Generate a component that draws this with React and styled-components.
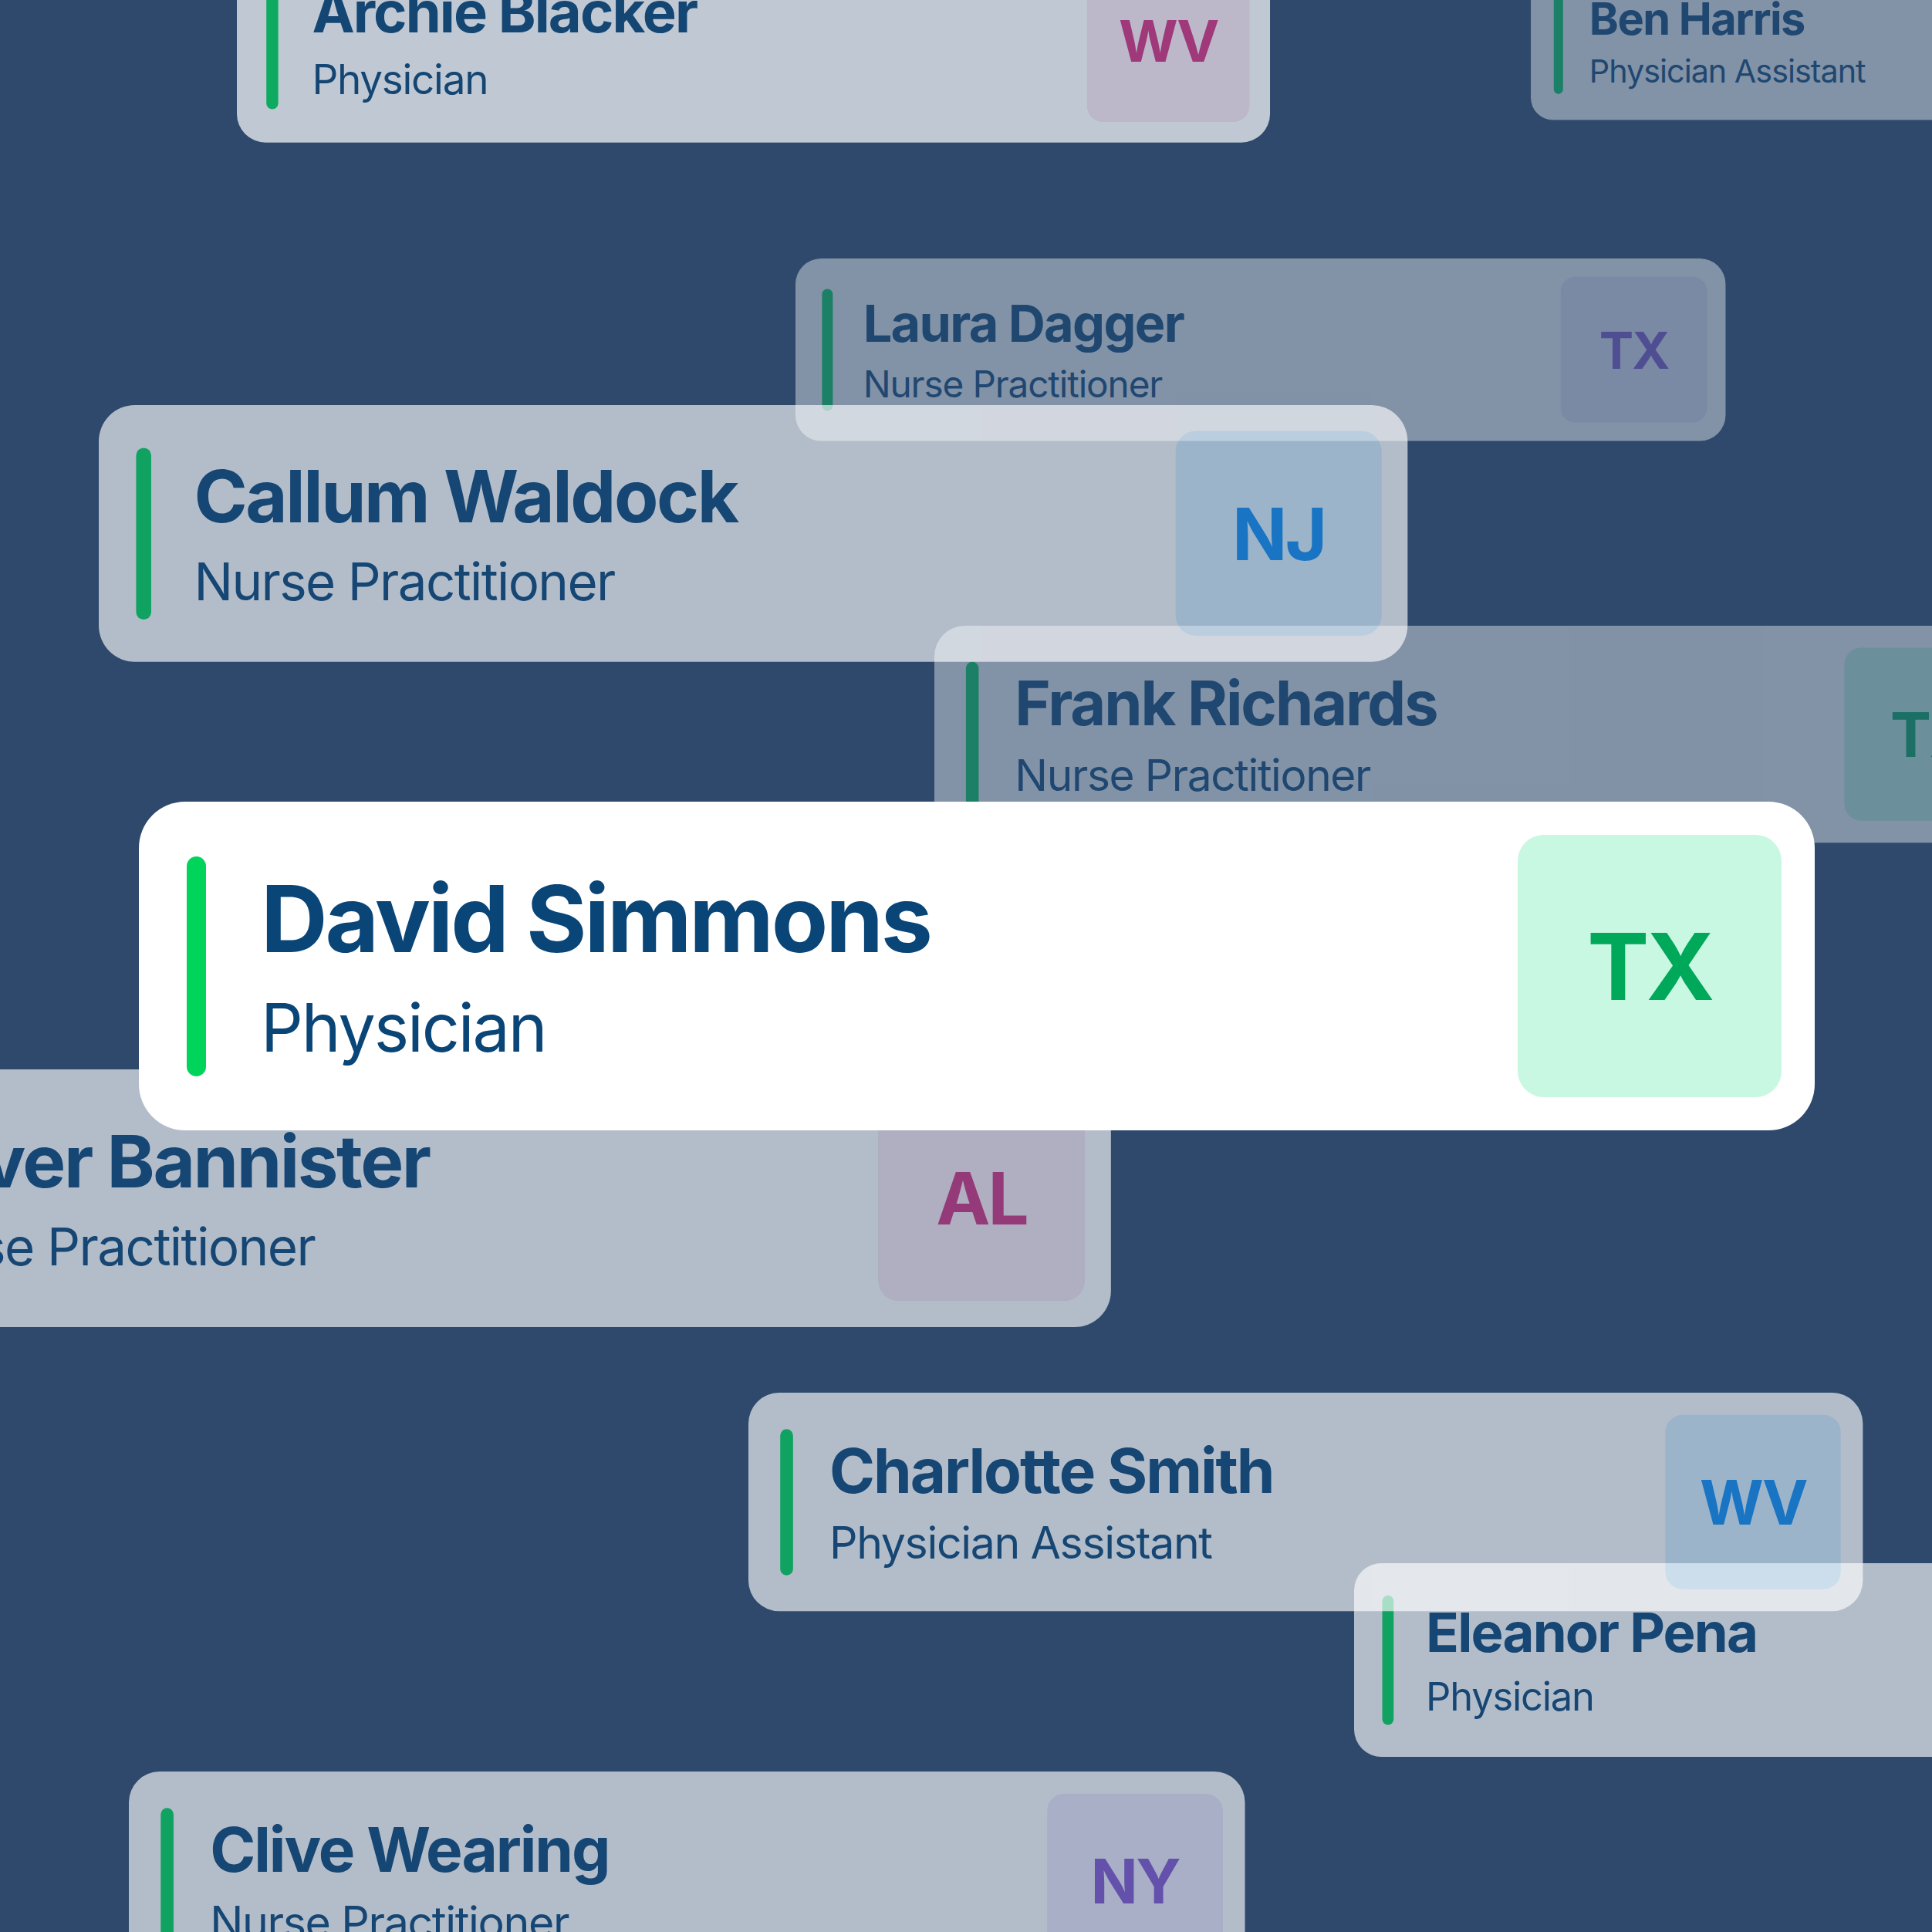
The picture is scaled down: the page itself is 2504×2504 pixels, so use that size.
import React from 'react';
import styled, { createGlobalStyle } from 'styled-components';

const GlobalStyle = createGlobalStyle`
  html, body {
    margin: 0;
    padding: 0;
    background: #2e496c;
  }
  body {
    font-family: Inter, "Noto Sans", sans-serif;
  }
`;

// palette for the state badges
const badgeColors = {
  green: { bg: '#c8f7e2', fg: '#00a859' },
  blue: { bg: '#dbf1ff', fg: '#0e8ff5' },
  magenta: { bg: '#f9e8f2', fg: '#cf337f' },
  purple: { bg: '#ede9f9', fg: '#8356cf' },
};

// cards in back-to-front order, x/y/scale measured on the canvas
const cards = [
  { name: 'Ben Harris', role: 'Physician Assistant', state: 'CA', tone: 'blue', x: 1984, y: -49, scale: 0.48, opacity: 0.4 },
  { name: 'Laura Dagger', role: 'Nurse Practitioner', state: 'TX', tone: 'purple', x: 1031, y: 335, scale: 0.555, opacity: 0.4 },
  { name: 'Eleanor Pena', role: 'Physician', state: 'NY', tone: 'blue', x: 1755, y: 2026, scale: 0.589, opacity: 0.64 },
  { name: 'Archie Blacker', role: 'Physician', state: 'WV', tone: 'magenta', x: 307, y: -78, scale: 0.6165, opacity: 0.7 },
  { name: 'Frank Richards', role: 'Nurse Practitioner', state: 'TX', tone: 'green', x: 1211, y: 811, scale: 0.66, opacity: 0.4 },
  { name: 'Charlotte Smith', role: 'Physician Assistant', state: 'WV', tone: 'blue', x: 970, y: 1805, scale: 0.665, opacity: 0.64 },
  { name: 'Clive Wearing', role: 'Nurse Practitioner', state: 'NY', tone: 'purple', x: 167, y: 2296, scale: 0.666, opacity: 0.64 },
  { name: 'Oliver Bannister', role: 'Nurse Practitioner', state: 'AL', tone: 'magenta', x: -263, y: 1386, scale: 0.784, opacity: 0.64 },
  { name: 'Callum Waldock', role: 'Nurse Practitioner', state: 'NJ', tone: 'blue', x: 128, y: 525, scale: 0.781, opacity: 0.64 },
  { name: 'David Simmons', role: 'Physician', state: 'TX', tone: 'green', x: 180, y: 1039, scale: 1, opacity: 1 },
];

export default function App() {
  return (
    <>
      <GlobalStyle />
      <Stage>
        {cards.map((c) => (
          <Card key={c.name} $x={c.x} $y={c.y} $scale={c.scale} $opacity={c.opacity}>
            <Bar />
            <Info>
              <Name>{c.name}</Name>
              <Role>{c.role}</Role>
            </Info>
            <Badge $bg={badgeColors[c.tone].bg} $fg={badgeColors[c.tone].fg}>
              {c.state}
            </Badge>
          </Card>
        ))}
      </Stage>
    </>
  );
}

const Stage = styled.div`
  position: relative;
  width: 2504px;
  height: 2504px;
  overflow: hidden;
  background: #2e496c;
`;

// one provider card, drawn at full size and scaled down for depth
const Card = styled.div`
  position: absolute;
  left: ${(p) => p.$x}px;
  top: ${(p) => p.$y}px;
  width: 2172px;
  height: 426px;
  box-sizing: border-box;
  padding: 0 43px 0 62px;
  display: flex;
  align-items: center;
  background: #ffffff;
  border-radius: 60px;
  opacity: ${(p) => p.$opacity};
  transform: scale(${(p) => p.$scale});
  transform-origin: 0 0;
`;

const Bar = styled.div`
  flex-shrink: 0;
  width: 25px;
  height: 285px;
  border-radius: 13px;
  background: #00d45b;
`;

const Info = styled.div`
  display: flex;
  flex-direction: column;
  gap: 16px;
  margin-left: 71px;
  color: #0a4578;
  white-space: nowrap;
`;

const Name = styled.div`
  font-size: 120px;
  line-height: 144px;
  font-weight: 700;
  letter-spacing: -0.026em;
`;

const Role = styled.div`
  font-size: 86px;
  line-height: 106px;
  font-weight: 400;
  letter-spacing: -0.024em;
`;

const Badge = styled.div`
  flex-shrink: 0;
  margin-left: auto;
  width: 342px;
  height: 340px;
  border-radius: 34px;
  display: flex;
  align-items: center;
  justify-content: center;
  background: ${(p) => p.$bg};
  color: ${(p) => p.$fg};
  font-size: 120px;
  font-weight: 700;
  letter-spacing: -0.03em;
`;
